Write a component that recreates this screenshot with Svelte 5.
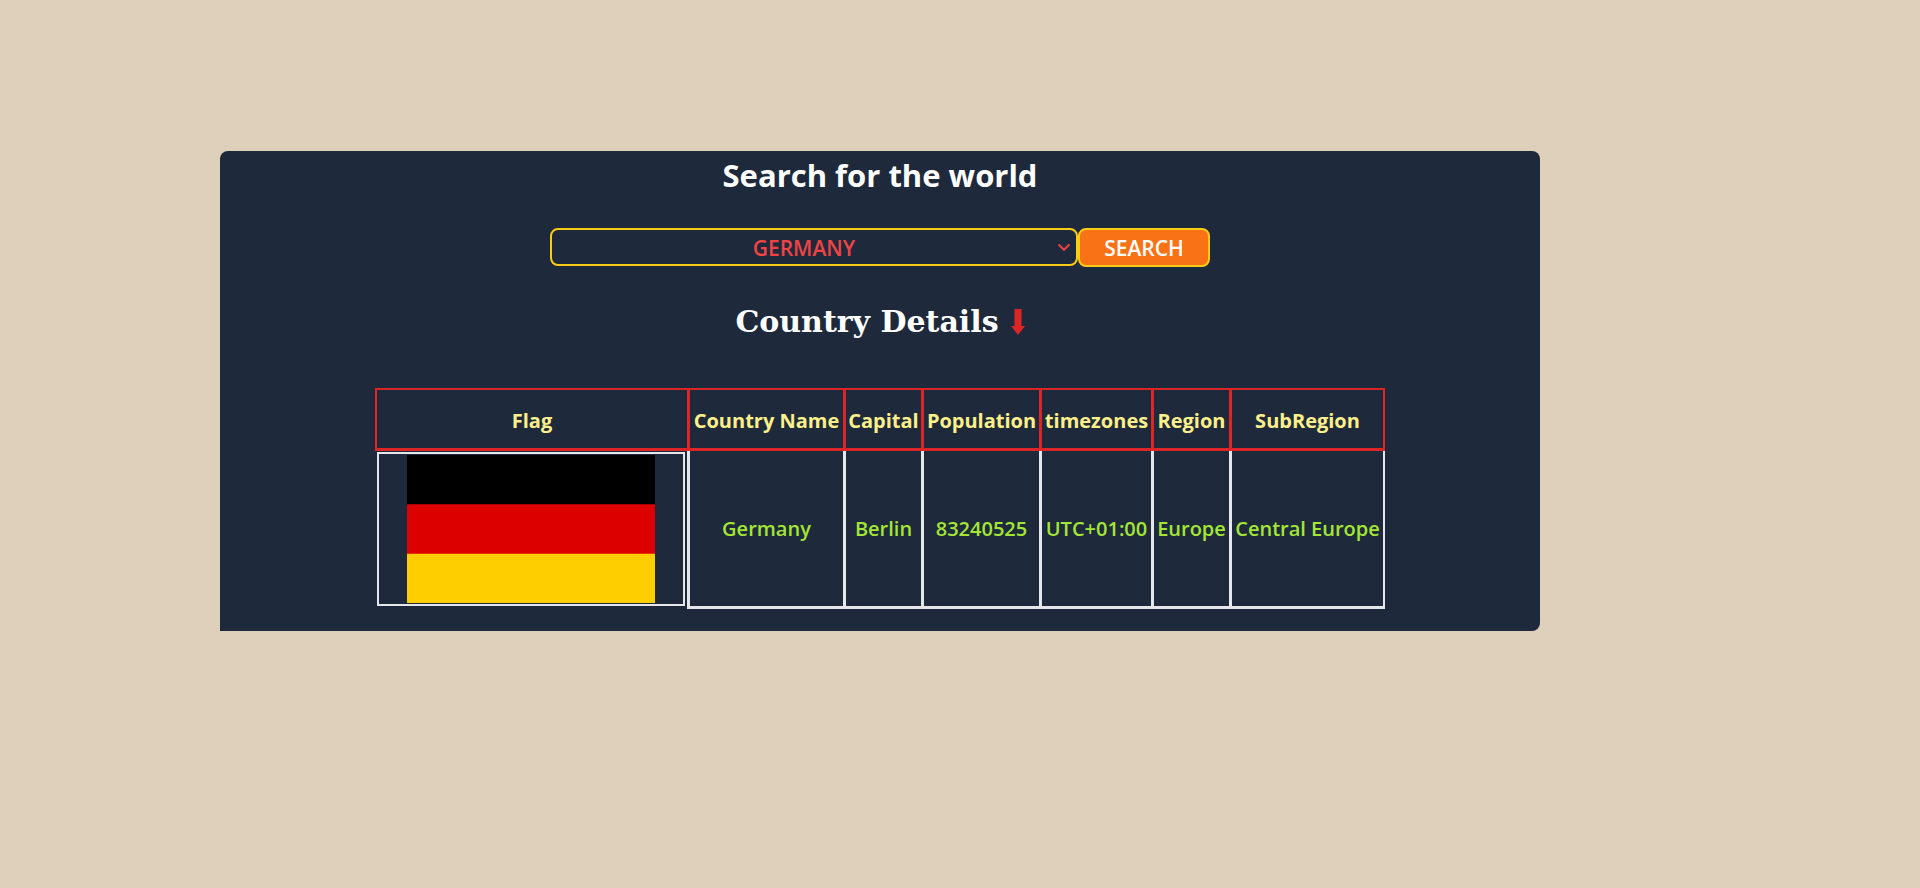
<script>
  let countries = ['Germany'];
  let selected = $state('Germany');

  const columns = [
    { label: 'Flag', width: 315 },
    { label: 'Country Name', width: 156 },
    { label: 'Capital', width: 78 },
    { label: 'Population', width: 118 },
    { label: 'timezones', width: 112 },
    { label: 'Region', width: 78 },
    { label: 'SubRegion', width: 153 }
  ];
  const details = ['Germany', 'Berlin', '83240525', 'UTC+01:00', 'Europe', 'Central Europe'];
</script>

<main class="page">
  <section class="panel">
    <h1>Search for the world</h1>

    <form class="search" onsubmit={(event) => event.preventDefault()}>
      <div class="picker">
        <select aria-label="Country" bind:value={selected}>
          {#each countries as country}
            <option value={country}>{country.toUpperCase()}</option>
          {/each}
        </select>
        <svg class="chevron" viewBox="0 0 12 8" aria-hidden="true">
          <path d="M.6 1.4 6 6.8 11.4 1.4" fill="none" stroke="currentColor" stroke-width="2" />
        </svg>
      </div>
      <button type="submit">SEARCH</button>
    </form>

    <h2>
      Country Details
      <svg class="arrow" viewBox="0 0 14 26" aria-hidden="true">
        <path d="M3.5 0h7v17H14L7 26 0 17h3.5z" fill="currentColor" />
      </svg>
    </h2>

    <table>
      <colgroup>
        {#each columns as column}
          <col style:width="{column.width}px" />
        {/each}
      </colgroup>
      <thead>
        <tr>
          {#each columns as column}
            <th scope="col">{column.label}</th>
          {/each}
        </tr>
      </thead>
      <tbody>
        <tr>
          <td class="flag-cell">
            <div class="flag">
              <svg viewBox="0 0 5 3" preserveAspectRatio="none" role="img" aria-label="Flag of Germany">
                <path fill="#000" d="M0 0h5v3H0z" />
                <path fill="#d00" d="M0 1h5v2H0z" />
                <path fill="#ffce00" d="M0 2h5v1H0z" />
              </svg>
            </div>
          </td>
          {#each details as value}
            <td>{value}</td>
          {/each}
        </tr>
      </tbody>
    </table>
  </section>
</main>

<style>
  :global(body) {
    margin: 0;
    background: #dfd0bb;
  }

  .page {
    padding: 151px 380px 0 220px;
    font-family: 'Open Sans', 'Noto Sans', sans-serif;
  }

  .panel {
    display: flex;
    flex-direction: column;
    align-items: center;
    padding-bottom: 22px;
    border-radius: 8px 8px 8px 0;
    background: #1e293b;
  }

  h1 {
    margin: 0;
    color: #fff;
    font-size: 31px;
    font-weight: 700;
    line-height: 48px;
  }

  .search {
    display: flex;
    align-items: flex-start;
    width: 50%;
    margin-top: 29px;
  }

  .picker {
    display: grid;
    width: 80%;
    align-items: center;
    color: #ef4444;
  }

  select,
  .chevron {
    grid-area: 1 / 1;
  }

  select {
    box-sizing: border-box;
    width: 100%;
    height: 38px;
    padding: 2px 20px 0 0;
    border: 2px solid #facc15;
    border-radius: 8px;
    appearance: none;
    background: transparent;
    color: inherit;
    font: 600 21px 'Open Sans', 'Noto Sans', sans-serif;
    text-align: center;
    text-align-last: center;
  }

  .chevron {
    justify-self: end;
    width: 12px;
    height: 8px;
    margin-right: 8px;
    pointer-events: none;
  }

  button {
    box-sizing: border-box;
    width: 20%;
    height: 39px;
    padding: 0;
    border: 2px solid #facc15;
    border-radius: 8px;
    background: #f97316;
    color: #fff;
    font: 600 21px 'Open Sans', 'Noto Sans', sans-serif;
  }

  h2 {
    display: flex;
    align-items: center;
    gap: 12px;
    margin: 31px 0 42px;
    color: #fff;
    font-family: 'DejaVu Serif', serif;
    font-size: 30px;
    font-weight: 700;
    line-height: 48px;
  }

  .arrow {
    width: 14px;
    height: 26px;
    color: #dc2626;
  }

  table {
    table-layout: fixed;
    width: 1010px;
    border-spacing: 0;
    font-size: 20px;
    font-weight: 600;
    text-align: center;
    white-space: nowrap;
  }

  th,
  td {
    box-sizing: border-box;
    padding: 0;
    border: 0 solid #e5e7eb;
    border-right-width: 3px;
    border-bottom-width: 3px;
  }

  th {
    height: 63px;
    padding-top: 2px;
    border-color: #dc2626;
    border-top-width: 2px;
    color: #fef08a;
    font-weight: 700;
  }

  th:first-child {
    border-left-width: 2px;
  }

  th:last-child,
  td:last-child {
    border-right-width: 2px;
  }

  td {
    height: 158px;
    color: #a3e635;
  }

  .flag-cell {
    padding: 1px 2px 3px;
    border-bottom-width: 0;
  }

  .flag {
    padding: 1px;
    border: 2px solid #e5e7eb;
  }

  .flag svg {
    display: block;
    width: 248px;
    height: 148px;
    margin: 0 auto;
  }
</style>
